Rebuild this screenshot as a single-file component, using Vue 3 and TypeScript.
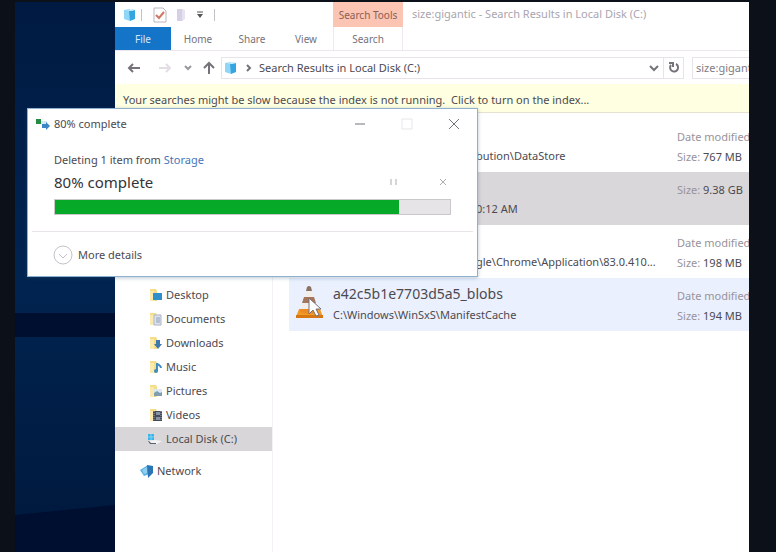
<script setup lang="ts">
interface Place {
  name: string
  icon: 'desktop' | 'documents' | 'downloads' | 'music' | 'pictures' | 'videos'
}

interface Result {
  name?: string
  detail: string
  size: string
  dated: boolean
  state: 'plain' | 'selected' | 'hover'
}

const places: Place[] = [
  { name: 'Desktop', icon: 'desktop' },
  { name: 'Documents', icon: 'documents' },
  { name: 'Downloads', icon: 'downloads' },
  { name: 'Music', icon: 'music' },
  { name: 'Pictures', icon: 'pictures' },
  { name: 'Videos', icon: 'videos' },
]

const results: Result[] = [
  { detail: 'bution\\DataStore', size: '767 MB', dated: true, state: 'plain' },
  { detail: '0:12 AM', size: '9.38 GB', dated: false, state: 'selected' },
  { detail: 'gle\\Chrome\\Application\\83.0.410...', size: '198 MB', dated: true, state: 'plain' },
  {
    name: 'a42c5b1e7703d5a5_blobs',
    detail: 'C:\\Windows\\WinSxS\\ManifestCache',
    size: '194 MB',
    dated: true,
    state: 'hover',
  },
]

const tabs: string[] = ['Home', 'Share', 'View']
const progress = 87
</script>

<template>
  <div class="screen">
    <div class="desktop">
      <svg class="wallpaper" viewBox="0 0 100 550" preserveAspectRatio="none" aria-hidden="true">
        <defs>
          <linearGradient id="wall" x1="0" y1="0" x2="0" y2="1">
            <stop offset="0" stop-color="#001a42" />
            <stop offset="0.5" stop-color="#002450" />
            <stop offset="1" stop-color="#00183c" />
          </linearGradient>
        </defs>
        <rect width="100" height="550" fill="url(#wall)" />
        <rect y="311" width="100" height="24" fill="#000f30" />
        <path d="M0 513L100 503V550H0Z" fill="#000f30" />
      </svg>

      <main class="explorer">
        <header class="titlebar">
          <div class="quick">
            <svg class="cube" viewBox="0 0 14 14"><path d="M1 2l6-1v12l-6-2z" fill="#8fd6f7" /><path d="M6 3l6-1v9l-5 2z" fill="#35a5e2" /><path d="M3 2l7-1 2 1-5 1z" fill="#c5ecfc" /></svg>
            <span class="bar"></span>
            <svg class="check" viewBox="0 0 14 16"><path d="M1 1h9l3 3v11H1z" fill="#fff" stroke="#bcb5be" /><path d="M3 8l3 3 5-6" fill="none" stroke="#cf7665" stroke-width="2" /></svg>
            <svg class="sheet" viewBox="0 0 12 14"><path d="M1 1h6v12H1z" fill="#d5d0e5" /><path d="M6 1l3 1v9l-3 2z" fill="#e6e2f0" /></svg>
            <svg class="more" viewBox="0 0 8 8"><path d="M1 1h6" stroke="#555" /><path d="M1 3h6L4 7z" fill="#555" /></svg>
            <span class="bar"></span>
          </div>
          <span class="context">Search Tools</span>
          <h1>size:gigantic - Search Results in Local Disk (C:)</h1>
        </header>

        <nav class="ribbon" aria-label="Ribbon">
          <div class="tabs">
            <button type="button" class="file">File</button>
            <button v-for="tab in tabs" :key="tab" type="button">{{ tab }}</button>
          </div>
          <button type="button" class="search-tab">Search</button>
        </nav>

        <div class="addressbar">
          <button type="button" class="back" aria-label="Back"><svg viewBox="0 0 14 12"><path d="M13 6H2M6 2L2 6l4 4" /></svg></button>
          <button type="button" class="forward" aria-label="Forward" disabled><svg viewBox="0 0 14 12"><path d="M1 6h11M8 2l4 4-4 4" /></svg></button>
          <button type="button" class="recent" aria-label="Recent locations"><svg viewBox="0 0 8 8"><path d="M1 2l3 3 3-3" /></svg></button>
          <button type="button" class="up" aria-label="Up"><svg viewBox="0 0 12 14"><path d="M6 13V2M1 7l5-5 5 5" /></svg></button>
          <div class="address">
            <svg class="cube" viewBox="0 0 14 14"><path d="M1 2l6-1v12l-6-2z" fill="#8fd6f7" /><path d="M6 3l6-1v9l-5 2z" fill="#35a5e2" /><path d="M3 2l7-1 2 1-5 1z" fill="#c5ecfc" /></svg>
            <svg class="crumb" viewBox="0 0 6 8"><path d="M1 1l3 3-3 3" /></svg>
            <span class="path">Search Results in Local Disk (C:)</span>
            <button type="button" class="drop" aria-label="Previous locations"><svg viewBox="0 0 10 8"><path d="M1 2l4 4 4-4" /></svg></button>
            <button type="button" class="refresh" aria-label="Refresh"><svg viewBox="0 0 12 12"><path d="M8 2a4 4 0 1 1-5 1M1 1h4v4" /></svg></button>
          </div>
          <input class="query" type="text" value="size:gigantic" aria-label="Search" />
        </div>

        <p class="notice">Your searches might be slow because the index is not running.&nbsp; Click to turn on the index...</p>

        <div class="body">
          <nav class="places" aria-label="Places">
            <a v-for="place in places" :key="place.name" href="#" class="place">
              <svg viewBox="0 0 14 14">
                <path d="M1 1h6l1 2v10H1z" fill="#f5dc88" />
                <path d="M1 3h4v10H1z" fill="#fbeab0" />
                <path v-if="place.icon === 'desktop'" d="M4 5h9v7H4z" fill="#2f8fcb" />
                <g v-else-if="place.icon === 'documents'"><path d="M5 3h7v10H5z" fill="#dde3ec" stroke="#a9b4c5" /><path d="M7 6h4M7 8h4M7 10h4" stroke="#8d9fb8" /></g>
                <path v-else-if="place.icon === 'downloads'" d="M7 4h4v4h2l-4 5-4-5h2z" fill="#3e78ad" />
                <g v-else-if="place.icon === 'music'"><path d="M8 11V3c0 2 4 2 4 5" fill="none" stroke="#3e8ebf" stroke-width="2" /><circle cx="7" cy="11" r="2" fill="#3e8ebf" /></g>
                <g v-else-if="place.icon === 'pictures'"><path d="M5 5h8v7H5z" fill="#dce8ef" /><path d="M5 12V9l3-2 3 2 2-1v4z" fill="#7f9fb0" /></g>
                <g v-else><path d="M4 3h9v10H4z" fill="#454a5b" /><path d="M7 4h4v3H7zM7 9h4v3H7z" fill="#8790a5" /><path d="M5 3v10M12 3v10" stroke="#a5a6ae" stroke-dasharray="1 1" /></g>
              </svg>
              {{ place.name }}
            </a>
            <a href="#" class="place disk">
              <svg viewBox="0 0 16 14"><path d="M1 2h6v6H1z" fill="#3bb5e8" /><path d="M4 2v6M1 5h6" stroke="#b9e8f8" stroke-width="0.5" /><path d="M1 9l7-1 7 1-5 3H3z" fill="#f2f3f5" /><path d="M1 9l2 3h6v-1H4L2 9z" fill="#58616d" /></svg>
              Local Disk (C:)
            </a>
            <a href="#" class="place network">
              <svg viewBox="0 0 14 14"><path d="M0 6l8-5 1 9-5 2z" fill="#58b0e3" /><path d="M7 1l6 1v7l-5 5z" fill="#2b75b5" /><path d="M2 6l5-3v6l-3 1z" fill="#8fd0f2" /></svg>
              Network
            </a>
          </nav>

          <section class="results" aria-label="Search results">
            <article v-for="item in results" :key="item.size" :class="['item', item.state]">
              <div class="thumb">
                <svg v-if="item.name" viewBox="0 0 30 34">
                  <path d="M4 24h21l3 8H1z" fill="#f19a28" /><path d="M1 30h27v3H1z" fill="#d87612" />
                  <path d="M12 2q2-2 4 0l7 24q-9 4-18 0z" fill="#f1eee9" />
                  <path d="M12 2q2-2 4 0l1 4h-6z" fill="#8b7267" /><path d="M9 12h10l2 6H7z" fill="#a5765b" /><path d="M5 24h18v3q-9 3-18 0z" fill="#e98a24" />
                  <path d="M14 13v16l4-4 3 6 3-1-3-6h5z" fill="#fff" stroke="#77707a" />
                </svg>
              </div>
              <div :class="['info', { partial: !item.name }]">
                <strong v-if="item.name">{{ item.name }}</strong>
                <span>{{ item.detail }}</span>
              </div>
              <div class="meta">
                <span v-if="item.dated" class="label">Date modified</span>
                <span><span class="label">Size:</span> {{ item.size }}</span>
              </div>
            </article>
          </section>
        </div>
      </main>

      <section class="dialog" role="dialog" aria-labelledby="dialog-title">
        <header>
          <svg class="copy" viewBox="0 0 16 12"><path d="M1 1h5v5H1z" fill="#258c43" /><path d="M6 3h6v3H6z" fill="#d5e9f5" /><path d="M7 6h4V4l4 4-4 4v-2H7z" fill="#3c86c8" /></svg>
          <h2 id="dialog-title">80% complete</h2>
          <button type="button" aria-label="Minimize"><svg viewBox="0 0 12 12"><path d="M1 6h10" /></svg></button>
          <button type="button" class="faint" aria-label="Maximize" disabled><svg viewBox="0 0 12 12"><path d="M1 1h10v10H1z" /></svg></button>
          <button type="button" aria-label="Close"><svg viewBox="0 0 12 12"><path d="M1 1l10 10M11 1L1 11" /></svg></button>
        </header>
        <div class="task">
          <p>Deleting 1 item from <a href="#">Storage</a></p>
          <div class="status">
            <strong>80% complete</strong>
            <button type="button" class="pause" aria-label="Pause"><svg viewBox="0 0 8 8"><path d="M1 1v6M6 1v6" /></svg></button>
            <button type="button" class="cancel" aria-label="Cancel"><svg viewBox="0 0 8 8"><path d="M1 1l6 6M7 1L1 7" /></svg></button>
          </div>
          <div class="track" role="progressbar" aria-label="Deletion progress" :aria-valuenow="progress">
            <div class="fill" :style="{ width: progress + '%' }"></div>
          </div>
        </div>
        <footer>
          <button type="button">
            <svg viewBox="0 0 20 20"><circle cx="10" cy="10" r="9" /><path d="M6 9l4 4 4-4" /></svg>
            More details
          </button>
        </footer>
      </section>
    </div>
  </div>
</template>

<style>
body {
  margin: 0;
  background: #0c1018;
}
</style>

<style scoped>
.screen {
  box-sizing: border-box;
  height: 100vh;
  padding: 2px 27px 0 15px;
  background: #0c1018;
  color: #4c4a50;
  font: 11px/20px "Noto Sans", "Open Sans", sans-serif;
}
.desktop {
  position: relative;
  display: grid;
  grid-template-columns: 100px minmax(0, 1fr);
  height: 100%;
  overflow: hidden;
}
.wallpaper {
  width: 100%;
  height: 100%;
}
svg {
  display: block;
  flex: none;
}
button {
  display: flex;
  align-items: center;
  justify-content: center;
  padding: 0;
  border: 0;
  background: none;
  color: inherit;
  font: inherit;
}
button svg,
.crumb {
  fill: none;
  stroke: #76727a;
  stroke-width: 2;
}
h1,
h2,
p {
  margin: 0;
  font: inherit;
}
a {
  color: inherit;
  text-decoration: none;
}
strong {
  font-weight: 400;
}
.explorer {
  display: flex;
  flex-direction: column;
  min-width: 0;
  overflow: hidden;
  background: #fff;
}
.titlebar {
  display: flex;
  height: 25px;
  white-space: nowrap;
}
.quick {
  display: flex;
  align-items: center;
  box-sizing: border-box;
  width: 218px;
  padding-left: 8px;
}
.cube {
  width: 14px;
  height: 14px;
}
.bar {
  width: 1px;
  height: 12px;
  margin-left: 4px;
  background: #c5c0c8;
}
.check {
  width: 14px;
  height: 16px;
  margin-left: 11px;
}
.sheet {
  width: 12px;
  height: 14px;
  margin-left: 9px;
}
.more {
  width: 8px;
  height: 8px;
  margin: 0 6px 0 8px;
}
.context {
  width: 70px;
  background: #fcc4b2;
  color: #8a6055;
  font-size: 10px;
  line-height: 27px;
  text-align: center;
}
h1 {
  padding-left: 9px;
  color: #aaa5af;
  line-height: 23px;
}
.ribbon {
  display: flex;
  height: 23px;
  border-bottom: 1px solid #ebe7ec;
  color: #76727a;
  font-size: 10px;
}
.tabs {
  display: flex;
  width: 218px;
}
.tabs button {
  width: 54px;
}
.tabs .file {
  width: 56px;
  background: #1475c8;
  color: #d5e8fa;
}
.search-tab {
  box-sizing: border-box;
  width: 70px;
  border: solid #eee9ee;
  border-width: 0 1px;
}
.addressbar {
  display: flex;
  align-items: center;
  height: 33px;
  padding-left: 12px;
}
.back svg,
.forward svg {
  width: 14px;
  height: 12px;
}
.forward {
  margin-left: 17px;
}
.forward svg {
  stroke: #e2dee4;
}
.recent {
  margin-left: 12px;
}
.recent svg {
  width: 8px;
  height: 8px;
  stroke: #9a969d;
}
.up {
  margin-left: 11px;
}
.up svg {
  width: 12px;
  height: 14px;
}
.address {
  display: flex;
  flex: 1;
  align-items: center;
  box-sizing: border-box;
  height: 22px;
  margin-left: 6px;
  padding-left: 2px;
  border: 1px solid #e8e3e9;
}
.crumb {
  width: 6px;
  height: 8px;
  margin: 0 7px 0 8px;
}
.path {
  flex: 1;
  white-space: nowrap;
}
.drop svg {
  width: 10px;
  height: 8px;
}
.refresh {
  width: 20px;
  height: 20px;
  margin-left: 4px;
  border-left: 1px solid #e8e3e9;
}
.refresh svg {
  width: 12px;
  height: 12px;
}
.query {
  box-sizing: border-box;
  width: 57px;
  height: 22px;
  margin-left: 8px;
  padding: 0 0 0 3px;
  border: solid #e8e3e9;
  border-width: 1px 0 1px 1px;
  border-radius: 0;
  color: #817c85;
  font: inherit;
}
.notice {
  box-sizing: border-box;
  height: 29px;
  padding: 6px 8px 0;
  border-bottom: 1px solid #e5e3d0;
  background: #ffffe1;
  line-height: 20px;
  white-space: nowrap;
}
.body {
  display: grid;
  flex: 1;
  grid-template-columns: 158px minmax(0, 1fr);
}
.places {
  padding-top: 170px;
  border-right: 1px solid #f5f1f6;
}
.place {
  display: flex;
  align-items: center;
  gap: 3px;
  height: 24px;
  padding-left: 34px;
}
.place svg {
  width: 14px;
  height: 14px;
}
.place.disk {
  padding-left: 32px;
  background: #d9d6da;
}
.place.disk svg {
  width: 16px;
}
.place.network {
  margin-top: 8px;
  padding-left: 25px;
}
.results {
  padding: 6px 0 0 16px;
}
.item {
  display: grid;
  grid-template-columns: 44px minmax(0, 1fr) 72px;
  align-items: start;
  height: 53px;
  overflow: hidden;
  white-space: nowrap;
}
.selected {
  background: #d9d7da;
}
.hover {
  background: #eaf0fe;
}
.thumb svg {
  width: 30px;
  height: 34px;
  margin: 7px 0 0 6px;
}
.info {
  display: flex;
  flex-direction: column;
  justify-content: flex-end;
  height: 47px;
}
.info strong {
  font-size: 14px;
  line-height: 22px;
}
.partial {
  padding-left: 143px;
}
.meta {
  display: flex;
  flex-direction: column;
  padding-top: 8px;
}
.label {
  color: #98939c;
}
.dialog {
  position: absolute;
  top: 106px;
  left: 12px;
  box-sizing: border-box;
  width: 451px;
  border: 1px solid #8fb0cf;
  background: #fff;
  box-shadow: 0 1px 4px #31557c55;
}
.dialog header {
  display: flex;
  align-items: center;
  height: 30px;
  padding: 0 17px 0 7px;
}
.dialog h2 {
  flex: 1;
  padding-left: 3px;
}
.dialog header button {
  width: 12px;
  margin-left: 35px;
}
.copy {
  width: 16px;
  height: 12px;
}
.dialog header button svg {
  width: 12px;
  height: 12px;
  stroke-width: 1;
}
.dialog header .faint svg {
  stroke: #e8e5ea;
}
.task {
  padding: 11px 26px 16px;
}
.task a {
  color: #4775b8;
}
.status {
  display: flex;
  align-items: center;
  height: 24px;
}
.status strong {
  flex: 1;
  color: #35333a;
  font-size: 15px;
}
.status svg {
  width: 8px;
  height: 8px;
  stroke: #b0aab3;
  stroke-width: 1;
}
.cancel {
  margin: 0 4px 0 41px;
}
.track {
  box-sizing: border-box;
  height: 16px;
  margin-top: 5px;
  border: 1px solid #cbc8cc;
  background: #e6e4e7;
}
.fill {
  height: 100%;
  background: #06a928;
}
footer {
  margin: 0 4px;
  padding: 12px 21px 10px;
  border-top: 1px solid #e9e4ea;
}
footer button {
  gap: 5px;
  height: 22px;
}
footer svg {
  width: 20px;
  height: 20px;
  stroke: #c5c0c8;
  stroke-width: 1;
}
</style>
